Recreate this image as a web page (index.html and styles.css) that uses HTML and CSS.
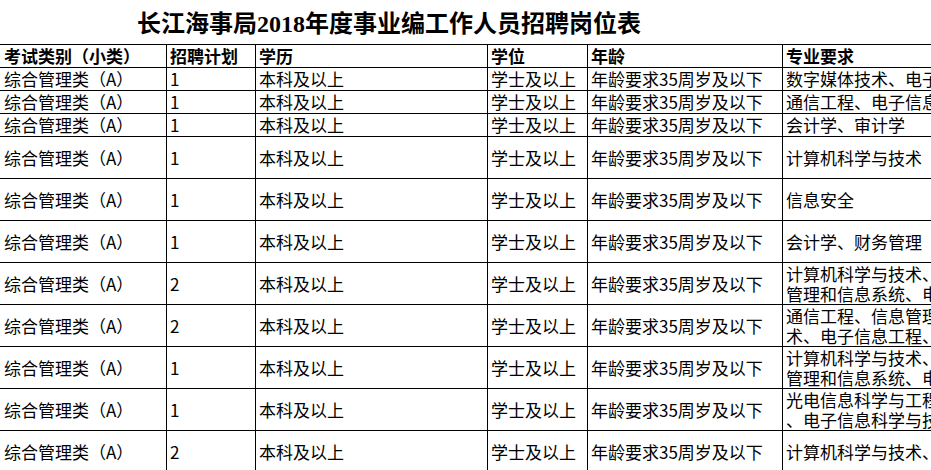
FILE: index.html
```html
<!DOCTYPE html>
<html lang="zh-CN">
<head>
<meta charset="utf-8">
<title>长江海事局2018年度事业编工作人员招聘岗位表</title>
<link rel="stylesheet" href="styles.css">
</head>
<body>
<div class="title">长江海事局<span class="num">2018</span>年度事业编工作人员招聘岗位表</div>
<div class="sheet">
  <div class="row short head">
    <div class="cell first">考试类别（小类）</div>
    <div class="cell">招聘计划</div>
    <div class="cell">学历</div>
    <div class="cell">学位</div>
    <div class="cell">年龄</div>
    <div class="cell spec">专业要求</div>
  </div>
  <div class="row short">
    <div class="cell first">综合管理类（A）</div>
    <div class="cell">1</div>
    <div class="cell">本科及以上</div>
    <div class="cell">学士及以上</div>
    <div class="cell">年龄要求35周岁及以下</div>
    <div class="cell spec">数字媒体技术、电子信息工程、计算机科学与技术</div>
  </div>
  <div class="row short">
    <div class="cell first">综合管理类（A）</div>
    <div class="cell">1</div>
    <div class="cell">本科及以上</div>
    <div class="cell">学士及以上</div>
    <div class="cell">年龄要求35周岁及以下</div>
    <div class="cell spec">通信工程、电子信息工程</div>
  </div>
  <div class="row short">
    <div class="cell first">综合管理类（A）</div>
    <div class="cell">1</div>
    <div class="cell">本科及以上</div>
    <div class="cell">学士及以上</div>
    <div class="cell">年龄要求35周岁及以下</div>
    <div class="cell spec">会计学、审计学</div>
  </div>
  <div class="row tall">
    <div class="cell first">综合管理类（A）</div>
    <div class="cell">1</div>
    <div class="cell">本科及以上</div>
    <div class="cell">学士及以上</div>
    <div class="cell">年龄要求35周岁及以下</div>
    <div class="cell spec">计算机科学与技术</div>
  </div>
  <div class="row tall">
    <div class="cell first">综合管理类（A）</div>
    <div class="cell">1</div>
    <div class="cell">本科及以上</div>
    <div class="cell">学士及以上</div>
    <div class="cell">年龄要求35周岁及以下</div>
    <div class="cell spec">信息安全</div>
  </div>
  <div class="row tall">
    <div class="cell first">综合管理类（A）</div>
    <div class="cell">1</div>
    <div class="cell">本科及以上</div>
    <div class="cell">学士及以上</div>
    <div class="cell">年龄要求35周岁及以下</div>
    <div class="cell spec">会计学、财务管理</div>
  </div>
  <div class="row tall">
    <div class="cell first">综合管理类（A）</div>
    <div class="cell">2</div>
    <div class="cell">本科及以上</div>
    <div class="cell">学士及以上</div>
    <div class="cell">年龄要求35周岁及以下</div>
    <div class="cell spec multi"><span>计算机科学与技术、信息</span><span>管理和信息系统、电子信息工程</span></div>
  </div>
  <div class="row tall">
    <div class="cell first">综合管理类（A）</div>
    <div class="cell">2</div>
    <div class="cell">本科及以上</div>
    <div class="cell">学士及以上</div>
    <div class="cell">年龄要求35周岁及以下</div>
    <div class="cell spec multi"><span>通信工程、信息管理与信息系统、计算机科学与技</span><span>术、电子信息工程、网络工程</span></div>
  </div>
  <div class="row tall">
    <div class="cell first">综合管理类（A）</div>
    <div class="cell">1</div>
    <div class="cell">本科及以上</div>
    <div class="cell">学士及以上</div>
    <div class="cell">年龄要求35周岁及以下</div>
    <div class="cell spec multi"><span>计算机科学与技术、信息</span><span>管理和信息系统、电子信息工程</span></div>
  </div>
  <div class="row tall">
    <div class="cell first">综合管理类（A）</div>
    <div class="cell">1</div>
    <div class="cell">本科及以上</div>
    <div class="cell">学士及以上</div>
    <div class="cell">年龄要求35周岁及以下</div>
    <div class="cell spec multi"><span>光电信息科学与工程、通信工程</span><span>、电子信息科学与技术</span></div>
  </div>
  <div class="row tall">
    <div class="cell first">综合管理类（A）</div>
    <div class="cell">2</div>
    <div class="cell">本科及以上</div>
    <div class="cell">学士及以上</div>
    <div class="cell">年龄要求35周岁及以下</div>
    <div class="cell spec">计算机科学与技术、软件工程</div>
  </div>
</div>
</body>
</html>
```

FILE: styles.css
```css
html, body {
  margin: 0;
  padding: 0;
  background: #fff;
  overflow: hidden;
}

body {
  width: 931px;
  height: 470px;
  color: #000;
  font-family: "Noto Sans CJK SC", "Liberation Sans", sans-serif;
}

.title {
  height: 44px;
  line-height: 44px;
  padding-left: 137px;
  font-size: 24px;
  font-weight: 700;
  white-space: nowrap;
}

.title .num {
  font-family: "Liberation Serif", "Noto Sans CJK SC", serif;
  font-weight: 700;
}

.sheet {
  width: max-content;
  border-top: 1px solid #000;
}

.row {
  display: grid;
  grid-template-columns: 167px 89px 232px 100px 195px 162px;
}

.row.short {
  height: 23px;
}

.row.tall {
  height: 42px;
}

.cell {
  box-sizing: border-box;
  border-right: 1px solid #000;
  border-bottom: 1px solid #000;
  padding-left: 3px;
  display: flex;
  align-items: center;
  white-space: nowrap;
  font-size: 17px;
  line-height: 22px;
}

.cell.first {
  padding-left: 4px;
}

.cell.spec {
  overflow: hidden;
}

.head .cell {
  font-weight: 700;
}

.cell.multi {
  flex-direction: column;
  align-items: flex-start;
  justify-content: center;
  line-height: 20px;
}
```
